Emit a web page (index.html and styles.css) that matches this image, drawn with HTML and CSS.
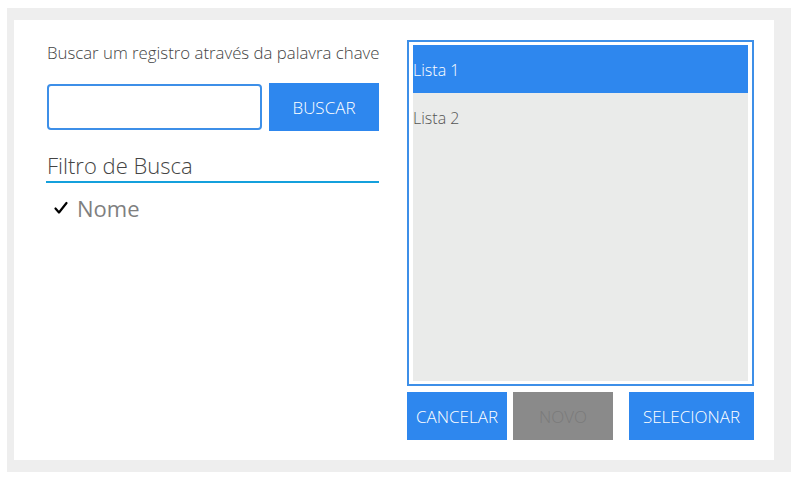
FILE: index.html
```html
<!DOCTYPE html>
<html>
<head>
<meta charset="utf-8">
<link rel="stylesheet" href="styles.css">
</head>
<body>
<div class="frame">
  <div class="panel">
    <div class="left">
      <p class="hint">Buscar um registro através da palavra chave</p>
      <div class="search-row">
        <input class="search-input" type="text">
        <button class="btn btn-search">BUSCAR</button>
      </div>
      <div class="filter-title">Filtro de Busca</div>
      <div class="filter-item">
        <svg class="check" width="14" height="14" viewBox="0 0 14 14"><polyline points="1.5,7.5 5,11.5 12.5,2" fill="none" stroke="#000" stroke-width="2.2" stroke-linecap="round" stroke-linejoin="round"/></svg>
        <span class="filter-name">Nome</span>
      </div>
    </div>
    <div class="right">
      <div class="list">
        <div class="list-inner">
          <div class="list-item selected">Lista 1</div>
          <div class="list-item">Lista 2</div>
        </div>
      </div>
      <div class="actions">
        <button class="btn btn-cancel">CANCELAR</button>
        <button class="btn btn-new">NOVO</button>
        <button class="btn btn-select">SELECIONAR</button>
      </div>
    </div>
  </div>
</div>
</body>
</html>
```

FILE: styles.css
```css
* { box-sizing: border-box; }
html, body { margin: 0; padding: 0; background: #ffffff; }
body { font-family: "Open Sans", "Liberation Sans", sans-serif; }

.frame {
  margin: 8px 0 0 7px;
  width: 784px;
  height: 464px;
  background: #eeeeee;
  padding: 12px 17px 12px 7px;
}

.panel {
  background: #ffffff;
  height: 440px;
  display: flex;
  padding: 20px 20px 20px 33px;
}

.left {
  width: 332px;
  display: flex;
  flex-direction: column;
}

.hint {
  margin: 0;
  padding-top: 3px;
  font-size: 16.8px;
  font-weight: 300;
  line-height: 20px;
  color: #444444;
  white-space: nowrap;
}

.search-row {
  display: flex;
  align-items: center;
  gap: 7px;
  margin-top: 20px;
}

.search-input {
  width: 215px;
  height: 46px;
  border: 2px solid #3d8fe8;
  border-radius: 4px;
  outline: none;
  padding: 0 8px;
  font-family: inherit;
}

.btn {
  border: none;
  margin: 0;
  font-family: "Open Sans", "Liberation Sans", sans-serif;
  font-weight: 300;
  font-size: 17px;
  color: #ffffff;
  background: #2e87ee;
  height: 48px;
  padding: 0;
}

.btn-search { width: 110px; }

.filter-title {
  margin-top: 20px;
  font-size: 22px;
  font-weight: 300;
  line-height: 28px;
  color: #444444;
  border-bottom: 2px solid #14a0dc;
  padding-bottom: 2px;
  margin-left: -1px;
  padding-left: 1px;
}

.filter-item {
  display: flex;
  align-items: center;
  margin-top: 11px;
  padding-left: 7px;
  height: 28px;
}

.check {
  display: block;
  margin-right: 9px;
}

.filter-name {
  font-size: 22px;
  color: #7f7f7f;
  line-height: 28px;
}

.right {
  margin-left: 28px;
  width: 347px;
  display: flex;
  flex-direction: column;
}

.list {
  height: 346px;
  border: 2px solid #3d8fe8;
  padding: 3px 4px;
}

.list-inner {
  height: 100%;
  background: #eaebea;
}

.list-item {
  height: 48px;
  line-height: 50px;
  font-size: 16px;
  font-weight: 300;
  color: #555555;
}

.list-item.selected {
  background: #2e87ee;
  color: #ffffff;
}

.actions {
  display: flex;
  margin-top: 6px;
}

.btn-cancel { width: 100px; }
.btn-new { width: 100px; margin-left: 6px; background: #8a8a8a; color: #7a7a7a; }
.btn-select { width: 125px; margin-left: 16px; }
```
